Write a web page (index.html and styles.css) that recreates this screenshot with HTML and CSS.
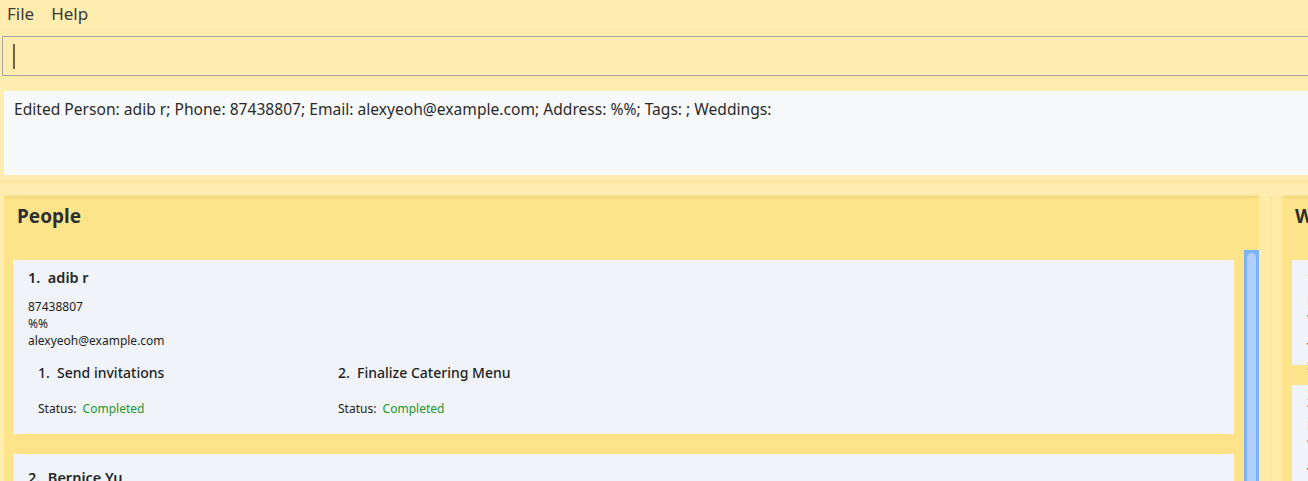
FILE: index.html
```html
<!DOCTYPE html>
<html>
<head>
<meta charset="utf-8">
<link rel="stylesheet" href="styles.css">
</head>
<body>
<div class="app">
  <div class="menubar">
    <span class="menu-item">File</span>
    <span class="menu-item">Help</span>
  </div>
  <div class="command-wrap">
    <div class="command-box"><span class="caret"></span></div>
  </div>
  <div class="result-wrap">
    <div class="result-box">Edited Person: adib r; Phone: 87438807; Email: alexyeoh@example.com; Address: %%; Tags: ; Weddings:</div>
  </div>
  <div class="main">
    <section class="panel people">
      <h2 class="panel-title">People</h2>
      <div class="list">
        <div class="cards">
          <div class="card">
            <div class="name">1.&nbsp; adib r</div>
            <div class="details">
              <div>87438807</div>
              <div>%%</div>
              <div>alexyeoh@example.com</div>
            </div>
            <div class="tasks">
              <div class="task">
                <div class="task-name">1.&nbsp; Send invitations</div>
                <div class="status">Status:&nbsp; <span class="done">Completed</span></div>
              </div>
              <div class="task">
                <div class="task-name">2.&nbsp; Finalize Catering Menu</div>
                <div class="status">Status:&nbsp; <span class="done">Completed</span></div>
              </div>
            </div>
          </div>
          <div class="card second">
            <div class="name">2.&nbsp; Bernice Yu</div>
          </div>
        </div>
        <div class="scrollbar"><div class="thumb"></div></div>
      </div>
    </section>
    <div class="divider"><div class="divider-line"></div></div>
    <section class="panel weddings">
      <h2 class="panel-title">Weddings</h2>
      <div class="list">
        <div class="cards">
          <div class="card small-card">
            <div class="wname">1. Wedding</div>
            <div class="wline">Date</div>
            <div class="wline">Venue</div>
            <div class="wname sub">Tasks</div>
            <div class="wline">Status</div>
          </div>
          <div class="card small-card">
            <div class="wname">2. Wedding</div>
            <div class="wline">Date</div>
            <div class="wline">Venue</div>
            <div class="wname sub">Tasks</div>
            <div class="wline">Status</div>
          </div>
        </div>
      </div>
    </section>
  </div>
</div>
</body>
</html>
```

FILE: styles.css
```css
* { box-sizing: border-box; }
html, body {
  margin: 0;
  padding: 0;
}
body {
  width: 1308px;
  height: 481px;
  overflow: hidden;
  background: #ffedb0;
  font-family: "Noto Sans", "Open Sans", sans-serif;
  color: #222;
}
.app {
  display: flex;
  flex-direction: column;
  height: 481px;
  overflow: hidden;
}
.menubar {
  height: 30px;
  flex-shrink: 0;
  display: flex;
  align-items: center;
  gap: 17px;
  padding-left: 7px;
  background: #ffedb0;
  border-bottom: 1px solid #fde9a6;
}
.menu-item {
  font-size: 17px;
  color: #3a3a3a;
  line-height: 1;
  padding-bottom: 3px;
}
.command-wrap {
  flex-shrink: 0;
  padding: 6px 0 0 2px;
  border-bottom: 1px solid #fde7a0;
}
.command-box {
  width: 1320px;
  height: 40px;
  border: 1px solid #a6a6a6;
  background: #ffedb0;
  display: flex;
  align-items: center;
  padding-left: 10px;
}
.caret {
  width: 2px;
  height: 25px;
  background: #6e6440;
}
.result-wrap {
  flex-shrink: 0;
  padding: 14px 0 0 4px;
  background: #ffedb0;
}
.result-box {
  width: 1320px;
  height: 84px;
  background: #f8f9fb;
  font-size: 15.6px;
  color: #2a2a2a;
  padding: 8px 10px;
  line-height: 20px;
  white-space: nowrap;
}
.main {
  flex: 1;
  display: flex;
  margin-top: 5px;
  padding-top: 13px;
  padding-left: 4px;
  border-top: 3px solid #ffe79f;
  min-height: 0;
}
.panel {
  background: #fde48a;
  display: flex;
  flex-direction: column;
  min-height: 0;
  border-top: 2px solid #f5da7f;
  box-shadow: 0 -1px 0 #fbe29b;
}
.people { width: 1255px; flex-shrink: 0; }
.weddings { flex: 1; min-width: 0; overflow: hidden; }
.panel-title {
  margin: 0;
  height: 52px;
  padding: 4px 0 0 13px;
  font-size: 19px;
  font-weight: 700;
  color: #2b2f33;
  line-height: 28px;
  white-space: nowrap;
}
.list {
  flex: 1;
  display: flex;
  padding-left: 9px;
  min-height: 0;
}
.cards {
  flex: 1;
  padding-top: 10px;
  display: flex;
  flex-direction: column;
  gap: 20px;
  min-width: 0;
}
.people .cards { padding-right: 10px; }
.card {
  background: #f0f3f8;
  flex-shrink: 0;
  padding: 6px 15px 5px;
}
.people .card:first-child { height: 174px; }
.card.second { padding-top: 12px; }
.name {
  font-size: 14.5px;
  font-weight: 600;
  color: #262626;
  line-height: 22px;
}
.details {
  margin-top: 10px;
  font-size: 12px;
  line-height: 17px;
  color: #1e1e1e;
}
.tasks {
  display: flex;
  margin-top: 14px;
  padding-left: 10px;
}
.task { width: 300px; }
.task-name {
  font-size: 14px;
  font-weight: 500;
  color: #1e1e1e;
  line-height: 20px;
}
.status {
  margin-top: 18px;
  font-size: 12px;
  color: #222;
  line-height: 16px;
}
.done { color: #25962a; }
.scrollbar {
  width: 15px;
  background: #7db2f6;
  padding: 3px 3px 0 3px;
  flex-shrink: 0;
}
.thumb {
  height: 100%;
  background: #aed0fa;
  border-radius: 5px 5px 0 0;
}
.divider {
  width: 23px;
  background: #ffeaa8;
  display: flex;
  justify-content: center;
  flex-shrink: 0;
}
.divider-line {
  width: 2px;
  background: #fde59e;
}
.weddings .list { padding-left: 10px; }
.small-card { height: 105px; padding: 8px 0 0 15px; }
.wname { font-size: 13px; font-weight: 600; line-height: 18px; white-space: nowrap; color: #333; }
.wline { font-size: 12px; line-height: 18px; color: #888; white-space: nowrap; margin-top: 1px; }
.wline:nth-child(2) { margin-top: 6px; }
.wname.sub { margin-top: 9px; }
```
